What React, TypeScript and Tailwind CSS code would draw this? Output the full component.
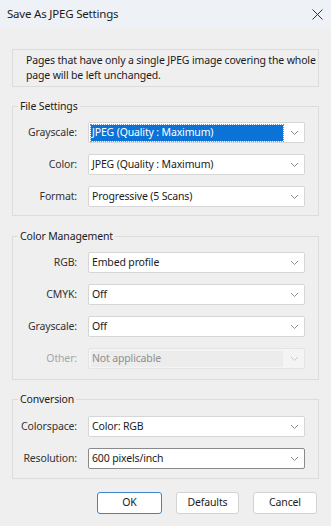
import React from 'react'

const font = { fontFamily: '"Noto Sans", "Open Sans", sans-serif' }

// Small chevron used by every drop-down
const Chevron: React.FC<{ dim?: boolean }> = ({ dim }) => (
  <svg width="9" height="6" viewBox="0 0 9 6" className="shrink-0">
    <path d="M1 1 L4.5 4.5 L8 1" fill="none" stroke={dim ? '#c8c8c8' : '#8c8c8c'} strokeWidth="1" />
  </svg>
)

interface SelectProps {
  value: string
  highlighted?: boolean
  disabled?: boolean
  focused?: boolean
}

const Select: React.FC<SelectProps> = ({ value, highlighted, disabled, focused }) => {
  const border = focused ? 'border-[#8a8a8a]' : disabled ? 'border-[#e4e4e4]' : 'border-[#d6d6d6]'
  return (
    <div
      className={`flex h-[21px] items-center border ${border} rounded-[2px] pl-[2px] pr-[5px] ${
        disabled ? 'bg-[#f4f4f4]' : 'bg-white'
      }`}
    >
      <div
        className={`flex h-[16px] flex-1 items-center pl-[1px] ${
          highlighted ? 'bg-[#0b72d6] text-white outline-1 outline-dotted outline-[#5a9be0]' : ''
        } ${disabled ? 'bg-[#ececec] text-[#8f8f8f]' : 'text-[#1b1b1b]'} mr-[7px]`}
      >
        {value}
      </div>
      <Chevron dim={disabled} />
    </div>
  )
}

interface RowProps extends SelectProps {
  label: string
}

const Row: React.FC<RowProps> = ({ label, ...rest }) => (
  <div className="flex items-center">
    <div
      className={`w-[65px] shrink-0 pr-[1px] text-right ${rest.disabled ? 'text-[#a6a6a6]' : 'text-[#333]'}`}
    >
      {label}
    </div>
    <div className="ml-[10px] flex-1">
      <Select {...rest} />
    </div>
  </div>
)

const Group: React.FC<{ title: string; children: React.ReactNode; className?: string }> = ({
  title,
  children,
  className,
}) => (
  <fieldset className={`border border-[#dcdcdc] pr-[13px] ${className ?? ''}`}>
    <legend className="ml-[5px] px-[2px] leading-[14px] text-[#1b1b1b]">{title}</legend>
    {children}
  </fieldset>
)

const Button: React.FC<{ label: string; primary?: boolean; className?: string }> = ({ label, primary, className }) => (
  <button
    className={`h-[22px] rounded-[3px] border bg-white text-[#1b1b1b] ${
      primary ? 'border-[#3a86c8]' : 'border-[#d3d3d3]'
    } ${className ?? ''}`}
  >
    {label}
  </button>
)

export default function App() {
  return (
    <div
      className="flex h-[526px] w-[331px] flex-col bg-[#f0eff0] text-[10.5px] tracking-[-0.15px]"
      style={font}
    >
      {/* title bar */}
      <div className="flex h-[28px] shrink-0 items-center justify-between bg-[#eef1f6] pl-[7px] pr-[8px]">
        <span className="text-[11.5px] tracking-[-0.2px] text-[#1b1b1b]">Save As JPEG Settings</span>
        <svg width="11" height="11" viewBox="0 0 11 11">
          <path d="M0.5 0.5 L10.5 10.5 M10.5 0.5 L0.5 10.5" stroke="#333" strokeWidth="1" />
        </svg>
      </div>

      <div className="flex flex-col px-[12px]">
        <div className="mt-[21px] h-[38px] border border-[#dcdcdc] pl-[13px] pt-[3px] leading-[15px] text-[#1b1b1b]">
          Pages that have only a single JPEG image covering the whole page will be left unchanged.
        </div>

        <Group title="File Settings" className="mt-[12px] pb-[8px] pt-[9px]">
          <div className="flex flex-col gap-[11px]">
            <Row label="Grayscale:" value="JPEG (Quality : Maximum)" highlighted />
            <Row label="Color:" value="JPEG (Quality : Maximum)" />
            <Row label="Format:" value="Progressive (5 Scans)" />
          </div>
        </Group>

        <Group title="Color Management" className="mt-[13px] pb-[10px] pt-[9px]">
          <div className="flex flex-col gap-[11px]">
            <Row label="RGB:" value="Embed profile" />
            <Row label="CMYK:" value="Off" />
            <Row label="Grayscale:" value="Off" />
            <Row label="Other:" value="Not applicable" disabled />
          </div>
        </Group>

        <Group title="Conversion" className="mt-[12px] pb-[9px] pt-[10px]">
          <div className="flex flex-col gap-[11px]">
            <Row label="Colorspace:" value="Color: RGB" />
            <Row label="Resolution:" value="600 pixels/inch" focused />
          </div>
        </Group>

        <div className="mt-[13px] flex justify-end gap-[14px] pr-[2px]">
          <Button label="OK" primary className="w-[65px]" />
          <Button label="Defaults" className="w-[63px]" />
          <Button label="Cancel" className="w-[64px]" />
        </div>
      </div>
    </div>
  )
}
